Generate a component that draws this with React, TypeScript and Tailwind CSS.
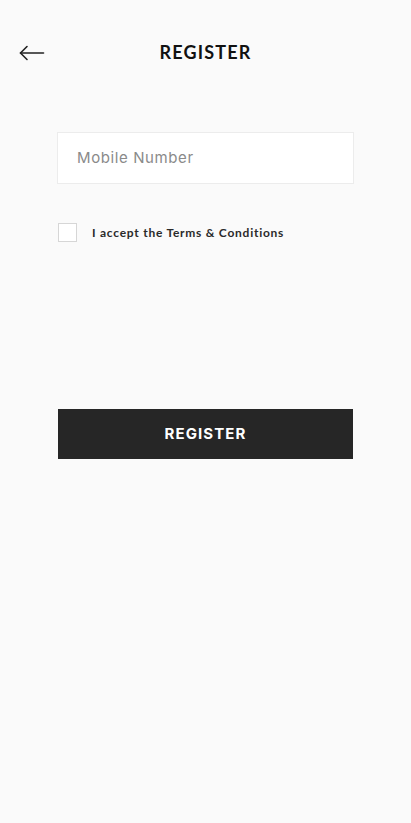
import { useState } from 'react';

function BackArrow() {
  return (
    <svg width="26" height="16" viewBox="0 0 26 16" fill="none" stroke="#222" strokeWidth="1.6" strokeLinecap="round" strokeLinejoin="round">
      <path d="M24.5 8H1.5" />
      <path d="M8 1.5L1.5 8L8 14.5" />
    </svg>
  );
}

export default function App() {
  const [accepted, setAccepted] = useState(false);

  return (
    <div className="min-h-screen w-full bg-[#fafafa] flex flex-col" style={{ fontFamily: 'Lato, sans-serif' }}>
      {/* Header */}
      <header className="relative h-[104px] flex items-center justify-center">
        <button className="absolute left-[19px] top-[45px]">
          <BackArrow />
        </button>
        <h1 className="text-[18px] font-bold tracking-[1.2px] text-[#111] mt-[1px]">REGISTER</h1>
      </header>

      <main className="flex flex-col px-[57px] pt-[28px]">
        <input
          type="tel"
          placeholder="Mobile Number"
          className="h-[52px] w-full bg-white border border-[#ececec] px-[19px] pb-[2px] text-[15px] tracking-[0.6px] text-[#333] placeholder:text-[#8a8a8a] outline-none"
          style={{ fontFamily: 'Inter, sans-serif' }}
        />

        <label className="mt-[39px] flex items-center gap-[15px] cursor-pointer pl-[1px]">
          <input
            type="checkbox"
            checked={accepted}
            onChange={(e) => setAccepted(e.target.checked)}
            className="appearance-none w-[19px] h-[19px] bg-white border border-[#d6d6d6] checked:bg-[#262626]"
          />
          <span className="text-[12px] font-bold tracking-[0.75px] text-[#2a2a2a]">I accept the Terms &amp; Conditions</span>
        </label>

        <button
          className="mt-[167px] ml-[1px] h-[50px] w-[295px] bg-[#262626] text-white text-[15px] font-bold tracking-[1.1px]"
          style={{ fontFamily: 'Inter, sans-serif' }}
        >
          REGISTER
        </button>
      </main>
    </div>
  );
}
